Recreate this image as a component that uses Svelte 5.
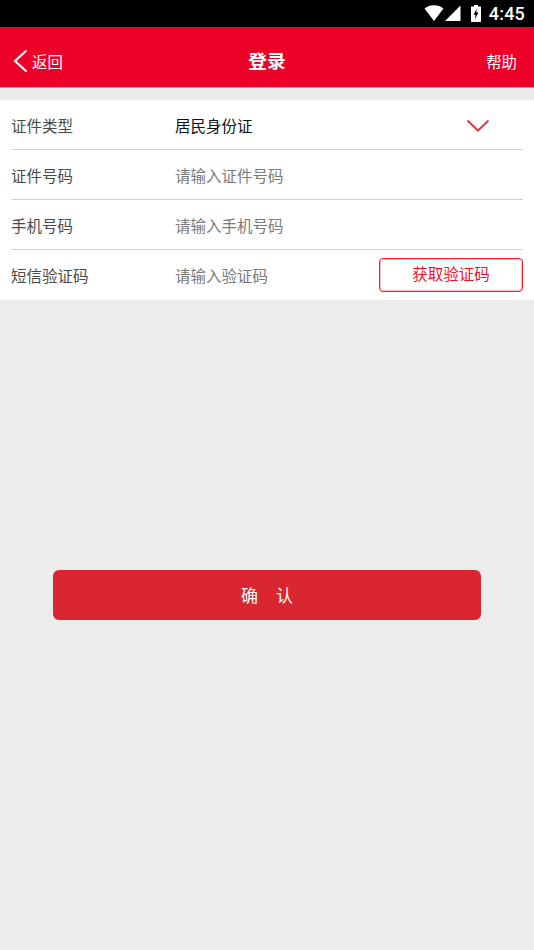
<script>
  const rows = [
    { label: '证件类型', value: '居民身份证' },
    { label: '证件号码', placeholder: '请输入证件号码' },
    { label: '手机号码', placeholder: '请输入手机号码' },
    { label: '短信验证码', placeholder: '请输入验证码', code: true }
  ];
</script>

<div class="page">
  <div class="status">
    <svg class="wifi" width="20" height="16" viewBox="0 0 20 16"><path d="M0.5 3.6 C5.5 -1 14.5 -1 19.5 3.6 L10 16 Z" fill="#fff"/></svg>
    <svg class="signal" width="16" height="16" viewBox="0 0 16 16"><path d="M0 16 L15.5 0.5 V16 Z" fill="#fff"/></svg>
    <svg class="battery" width="10" height="17" viewBox="0 0 10 17"><path d="M3 0 H7 V1.5 H10 V17 H0 V1.5 H3 Z" fill="#fff"/><path d="M5.8 3.5 L2.6 9.8 H4.6 L4 14.2 L7.4 7.5 H5.3 Z" fill="#000"/></svg>
    <span class="time">4:45</span>
  </div>

  <header class="nav">
    <div class="back">
      <svg width="16" height="24" viewBox="0 0 16 24"><path d="M13.5 1.5 L2 12 L13.5 22.5" fill="none" stroke="#fff" stroke-width="2.2"/></svg>
      <span>返回</span>
    </div>
    <h1>登录</h1>
    <span class="help">帮助</span>
  </header>

  <section class="form">
    {#each rows as row}
      <div class="row">
        <span class="label">{row.label}</span>
        {#if row.value}
          <span class="value">{row.value}</span>
          <svg class="chevron" width="24" height="14" viewBox="0 0 24 14"><path d="M1.5 1.5 L12 11.5 L22.5 1.5" fill="none" stroke="#dd3a48" stroke-width="2"/></svg>
        {:else}
          <span class="placeholder">{row.placeholder}</span>
        {/if}
        {#if row.code}
          <button class="code">获取验证码</button>
        {/if}
      </div>
    {/each}
  </section>

  <div class="action">
    <button class="confirm"><span>确</span><span>认</span></button>
  </div>
</div>

<style>
  :global(body) {
    margin: 0;
    background: #ececec;
  }
  .page {
    width: 534px;
    height: 950px;
    overflow: hidden;
    background: #ececec;
    font-family: "Noto Sans CJK SC", "Roboto", sans-serif;
    display: flex;
    flex-direction: column;
  }
  .status {
    height: 27px;
    flex: none;
    background: #000;
    display: flex;
    align-items: center;
    justify-content: flex-end;
    padding-right: 9px;
    box-sizing: border-box;
  }
  .wifi { margin-top: -1px; }
  .signal { margin-left: 1px; margin-top: -1px; }
  .battery { margin-left: 10px; margin-top: -1px; }
  .time {
    font-family: Roboto, sans-serif;
    font-size: 18px;
    font-weight: 500;
    color: #fff;
    margin-left: 8px;
    letter-spacing: 0.2px;
  }
  .nav {
    height: 61px;
    flex: none;
    box-sizing: border-box;
    background: #ec0028;
    color: #fff;
    border-bottom: 1px solid #d9a0ac;
    position: relative;
    display: flex;
    align-items: center;
    justify-content: space-between;
    padding: 7px 17px 0 13px;
  }
  .back {
    display: flex;
    align-items: center;
    gap: 3px;
    font-size: 15.4px;
  }
  .nav h1 {
    position: absolute;
    left: 0;
    right: 0;
    margin: -2px 0 0;
    text-align: center;
    font-size: 18.7px;
    font-weight: 700;
  }
  .help { font-size: 15.4px; }
  .form {
    margin-top: 12px;
    background: #fff;
    padding-left: 11px;
    padding-right: 11px;
  }
  .row {
    height: 50px;
    box-sizing: border-box;
    border-bottom: 1px solid #d0d0d0;
    display: flex;
    align-items: center;
  }
  .row:last-child { border-bottom: none; }
  .label {
    width: 164px;
    flex: none;
    font-size: 15.5px;
    color: #4a4a4a;
  }
  .value {
    font-size: 15.5px;
    color: #111;
    flex: 1;
    margin-top: 1px;
  }
  .chevron { margin-right: 33px; margin-top: 2px; }
  .placeholder {
    font-size: 15.5px;
    color: #7a7a7a;
    flex: 1;
  }
  .code {
    width: 144px;
    height: 34px;
    padding: 0 0 3px;
    border: 1px solid #ff1a28;
    box-shadow: inset 0 0 0 1px rgba(255, 40, 50, 0.3);
    border-radius: 4px;
    background: #fff;
    color: #f5102a;
    font: inherit;
    font-size: 15.5px;
    margin-top: -1px;
  }
  .action {
    padding: 270px 53px 0;
  }
  .confirm {
    width: 100%;
    height: 50px;
    border: none;
    border-radius: 6px;
    background: #da2630;
    color: #fff;
    font: inherit;
    font-size: 17px;
    padding: 0 0 1px;
    display: flex;
    align-items: center;
    justify-content: center;
    gap: 18px;
  }
</style>
